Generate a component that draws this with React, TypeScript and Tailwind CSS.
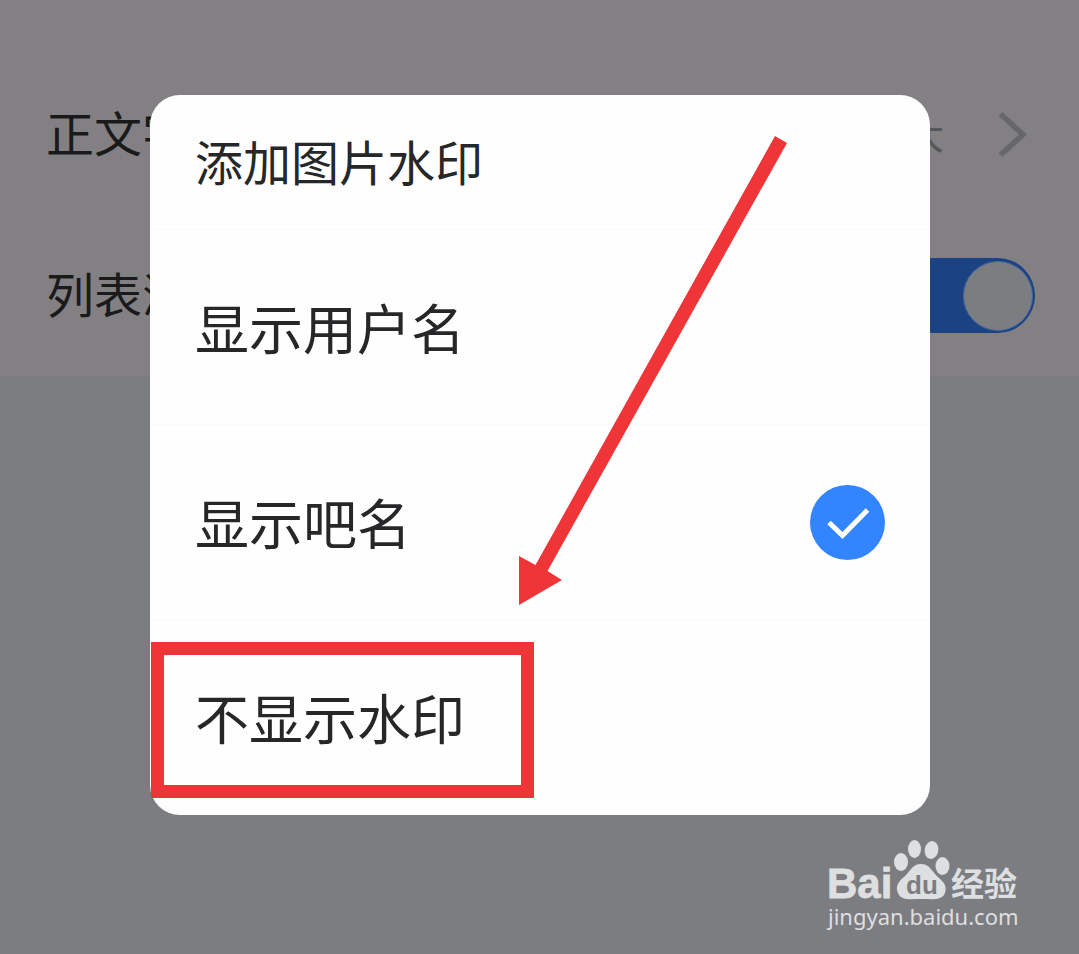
import { useState } from "react";

const OPTIONS = ["显示用户名", "显示吧名", "不显示水印"];

function SettingsPanel() {
  return (
    <section className="bg-[#828083] pt-[54px] text-[48px] leading-[72px] text-[#1a1a1b]">
      <a href="#font-size" className="flex h-[161px] items-center justify-between pr-[52px] pl-[46px]">
        <span className="pb-[8px]">正文字</span>
        <span className="flex items-center gap-[55px] text-[#555659]">
          <span className="pb-[6px] text-[39px] leading-[58px]">大</span>
          <svg className="h-[46px] w-[28px]" viewBox="0 0 28 46" fill="none" stroke="#656769" strokeWidth="5.500">
            <path d="M1.500 2 L24 22.500 L1.500 43" />
          </svg>
        </span>
      </a>
      <label className="flex h-[161px] items-center justify-between pr-[44px] pl-[46px]">
        <span className="pb-[8px]">列表浏</span>
        <input type="checkbox" role="switch" defaultChecked className="peer sr-only" />
        <span className="flex h-[75px] w-[140px] items-center justify-end rounded-full bg-[#1b4282] pr-[2px]">
          <span className="size-[70px] rounded-full border border-[#4a689b] bg-[#7b7d80]" />
        </span>
      </label>
    </section>
  );
}

function CheckMark() {
  return (
    <svg className="size-[76px]" viewBox="0 0 76 76" fill="none" aria-hidden="true">
      <circle cx="37.500" cy="38.500" r="37.500" fill="#3385ff" />
      <path d="M19 38.500 L32.500 51.500 L57.500 26" stroke="#fff" strokeWidth="5" />
    </svg>
  );
}

function PointerArrow() {
  return (
    <svg className="pointer-events-none absolute top-0 left-0 h-[720px] w-[780px]" viewBox="0 0 780 720" fill="#f03538" aria-hidden="true">
      <path d="M625 41 L637 48 L397.500 476 L412 485 L369 510 L369 461 L385.500 470 Z" />
    </svg>
  );
}

function Watermark() {
  return (
    <footer className="absolute right-[57px] bottom-[24px] w-[194px] text-[#dedfe0]">
      <svg className="h-[66px] w-[194px] overflow-visible" viewBox="0 0 194 66" fill="currentColor">
        <text x="-1" y="60" fontSize="42" fontWeight="700" fontFamily="Liberation Sans, sans-serif" stroke="currentColor" strokeWidth="0.800">Bai</text>
        <ellipse cx="73" cy="24" rx="7" ry="9" />
        <ellipse cx="86.500" cy="11" rx="6.500" ry="9" />
        <ellipse cx="103.500" cy="12" rx="6.800" ry="9" transform="rotate(10 103.500 12)" />
        <ellipse cx="114.500" cy="28" rx="7" ry="9" />
        <path d="M93 26 C84 26 82 34 76 39 C68 45 68 51 70 55 C73 63 83 61 93 61 C103 61 114 63 117 55 C119 49 117 45 110 39 C104 34 102 26 93 26 Z" />
        <text x="78" y="56" fontSize="26" fontWeight="700" fontFamily="Liberation Sans, sans-serif" fill="#7b7d80">du</text>
        <text x="123" y="58" fontSize="33" fontWeight="700" fontFamily="Noto Sans CJK SC, sans-serif">经验</text>
      </svg>
      <p className="pb-[2px] font-['Noto_Sans',sans-serif] text-[22px] leading-[24px] whitespace-nowrap">jingyan.baidu.com</p>
    </footer>
  );
}

export default function App() {
  const [selected, setSelected] = useState("显示吧名");

  return (
    <main className="relative min-h-screen bg-[#7b7d80] font-['Noto_Sans_CJK_SC',sans-serif]">
      <SettingsPanel />
      <div className="absolute inset-0 pt-[95px] pr-[149px] pl-[150px]">
        <fieldset
          role="dialog"
          aria-labelledby="dialog-title"
          className="relative w-full rounded-[30px] bg-[#fefefe] text-[#262728]"
        >
          <h1 id="dialog-title" className="flex h-[135px] items-center border-b border-[#fafafa] px-[45px] pb-[4px] text-[48px] leading-[72px]">
            添加图片水印
          </h1>
          {OPTIONS.map((option) => (
            <label
              key={option}
              className="flex h-[195px] items-center justify-between border-b border-[#fafafa] pr-[44px] pl-[45px] text-[54px] leading-[80px] last-of-type:border-transparent"
            >
              <span>{option}</span>
              <input
                type="radio"
                name="image-watermark"
                checked={selected === option}
                onChange={() => setSelected(option)}
                className="sr-only"
              />
              {selected === option && <CheckMark />}
            </label>
          ))}
          <div className="pointer-events-none absolute bottom-[17px] left-px h-[156px] w-[383px] border-[13px] border-[#f03538]" />
          <PointerArrow />
        </fieldset>
      </div>
      <Watermark />
    </main>
  );
}
